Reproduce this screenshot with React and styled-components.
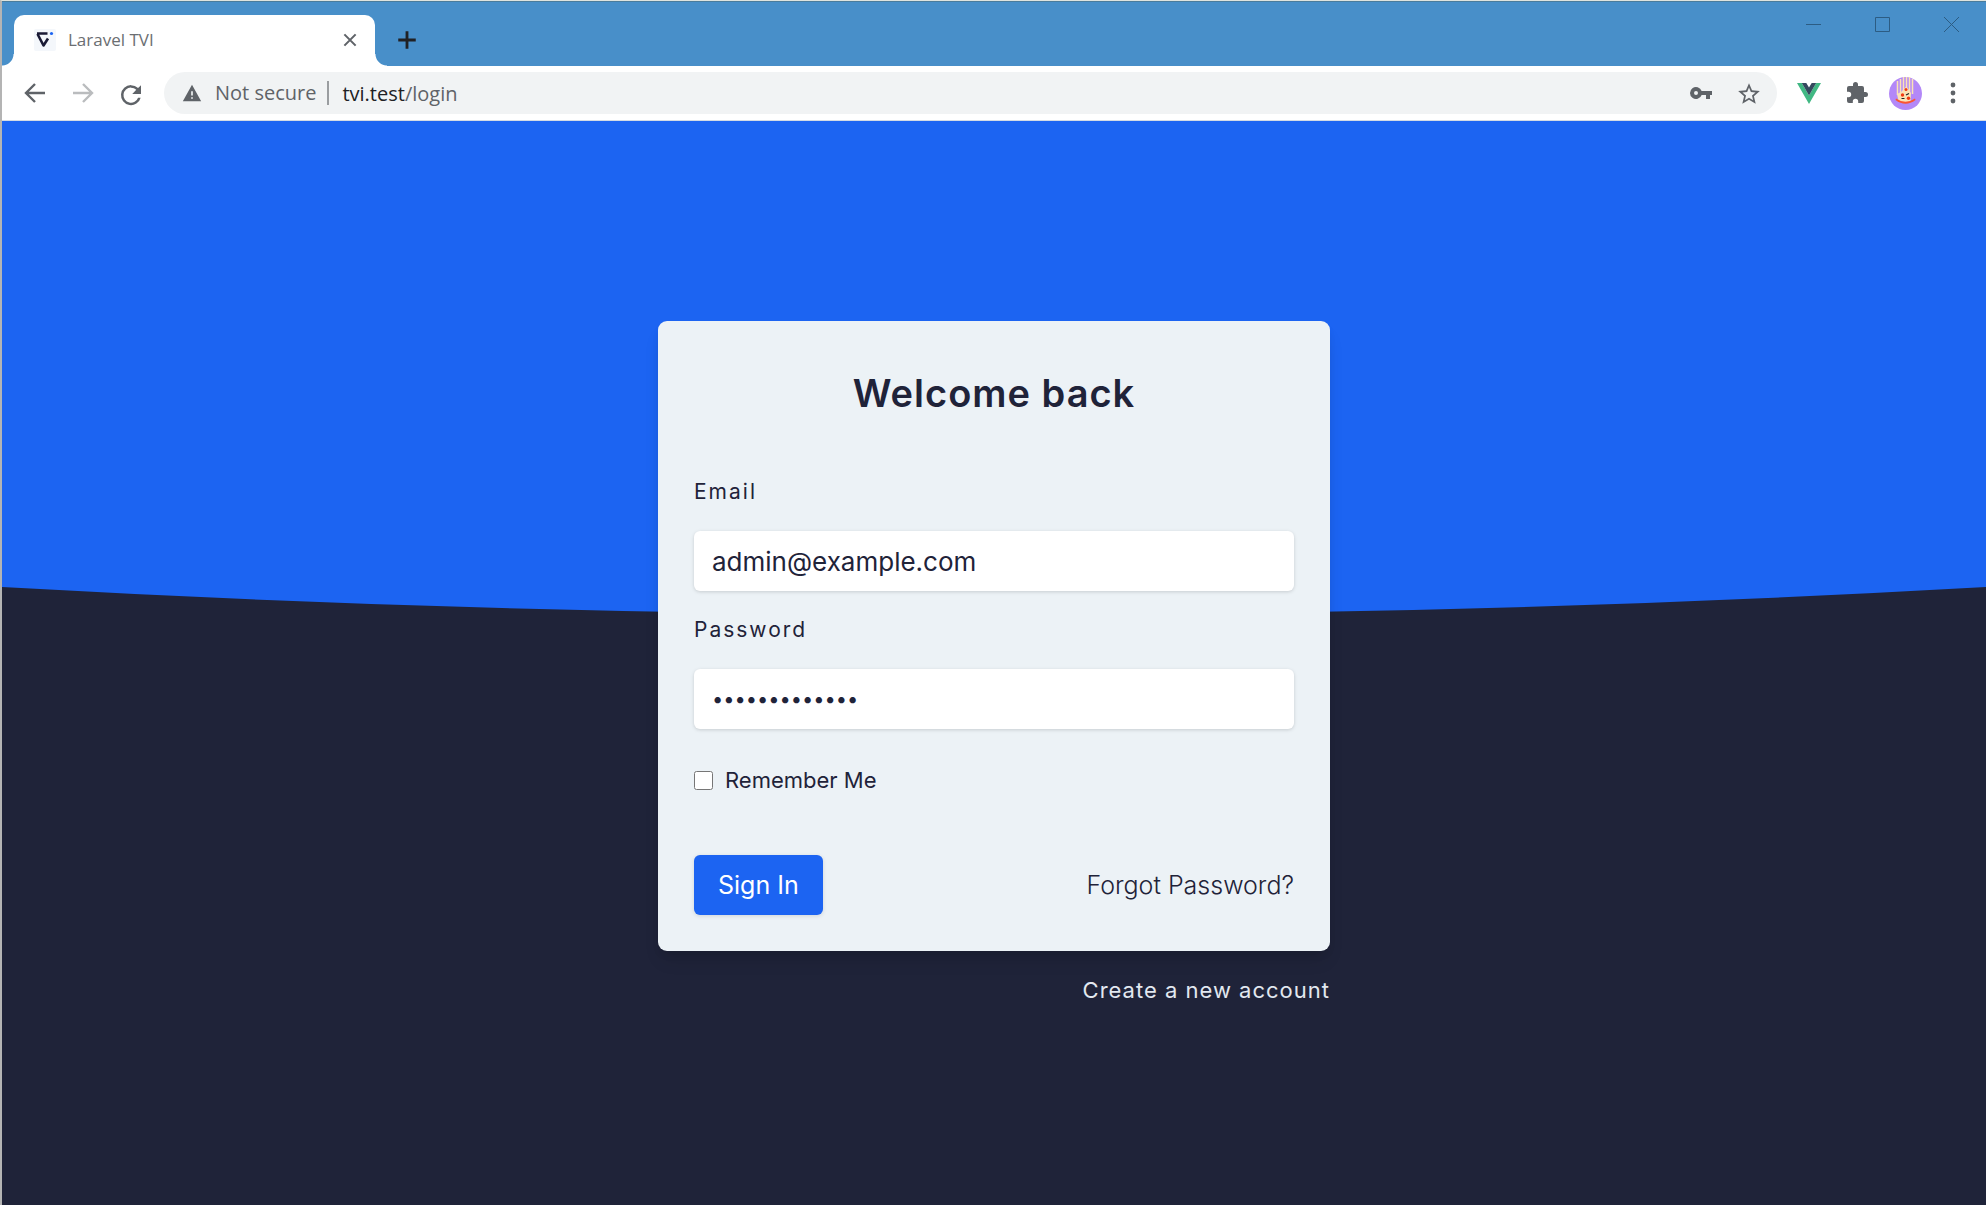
import React, { useState } from "react";
import styled, { createGlobalStyle } from "styled-components";

const navy = "#1f2339";
const blue = "#1c64f2";

const GlobalStyle = createGlobalStyle`
  *, *::before, *::after { box-sizing: border-box; }
  body { margin: 0; font-family: Inter, "Open Sans", sans-serif; color: ${navy}; }
  button, input { font: inherit; color: inherit; margin: 0; }
  a { color: inherit; text-decoration: none; }
  svg { display: block; }
`;

const Window = styled.div`
  display: flex;
  flex-direction: column;
  min-height: 100vh;
  border-left: 2px solid #b4b4b4;
  border-top: 1px solid #dfe3de;
  border-bottom: 1px solid #8b8b8b;
`;

const TitleBar = styled.header`
  display: flex;
  align-items: flex-end;
  height: 65px;
  background: #488fc9;
  border-top: 1px solid #4a7c9c;
  padding-left: 12px;
`;

const Tab = styled.div`
  position: relative;
  display: flex;
  align-items: center;
  width: 361px;
  height: 51px;
  padding: 0 16px 2px 20px;
  background: #fff;
  border-radius: 10px 10px 0 0;
  font-family: "Open Sans", sans-serif;
  font-size: 17px;
  color: #6b6e72;

  &::before, &::after {
    content: "";
    position: absolute;
    bottom: 0;
    width: 12px;
    height: 12px;
  }
  &::before {
    right: 100%;
    background: radial-gradient(circle at 0 0, transparent 11px, #fff 12px);
  }
  &::after {
    left: 100%;
    background: radial-gradient(circle at 100% 0, transparent 11px, #fff 12px);
  }
`;

const TabTitle = styled.span`
  flex: 1;
  margin-left: 12px;
`;

const IconButton = styled.button`
  display: grid;
  place-items: center;
  width: ${(p) => p.$w || 24}px;
  height: ${(p) => p.$h || 24}px;
  padding: 0;
  border: 0;
  background: none;
  color: ${(p) => p.$color || "#5f6368"};
`;

const NewTab = styled(IconButton)`
  align-self: center;
  margin: 12px 0 0 18px;
`;

const WindowControls = styled.div`
  display: flex;
  align-self: flex-start;
  margin-left: auto;
`;

const Toolbar = styled.nav`
  display: flex;
  align-items: center;
  height: 55px;
  padding: 0 9px;
  background: #fff;
  border-bottom: 1px solid #d5dbe4;
`;

const AddressBar = styled.div`
  display: flex;
  flex: 1;
  align-items: center;
  height: 42px;
  margin-left: 9px;
  padding: 0 4px 0 18px;
  border-radius: 21px;
  background: #f1f3f4;
  font-family: "Open Sans", sans-serif;
  font-size: 20px;
  color: #5f6368;
`;

const Security = styled.span`
  margin-left: 13px;
  padding-right: 11px;
  border-right: 2px solid #9a9da0;
  line-height: 24px;
`;

const Url = styled.span`
  flex: 1;
  margin-left: 13px;
  b { font-weight: 400; color: #202124; }
`;

const Actions = styled.div`
  display: flex;
  align-items: center;
  margin-left: 8px;
`;

const Page = styled.main`
  position: relative;
  flex: 1;
  display: flex;
  flex-direction: column;
  align-items: center;
  padding: 200px 24px;
  background: ${navy};
`;

const Backdrop = styled.svg`
  position: absolute;
  inset: 0 0 auto 0;
  width: 100%;
  height: 500px;
`;

const Content = styled.div`
  position: relative;
  display: flex;
  flex-direction: column;
  width: 100%;
  max-width: 672px;
`;

const Card = styled.form`
  display: flex;
  flex-direction: column;
  padding: 48px 36px 36px;
  border-radius: 9px;
  background: #ecf2f6;
  box-shadow: 0 12px 18px -4px rgba(0, 0, 0, 0.12), 0 5px 8px -2px rgba(0, 0, 0, 0.08);
`;

const Title = styled.h1`
  margin: 0 0 60px;
  font-size: 38px;
  line-height: 48px;
  font-weight: 600;
  letter-spacing: 1px;
  text-align: center;
`;

const Field = styled.div`
  display: flex;
  flex-direction: column;
  gap: 24px;
  margin-bottom: 24px;
`;

const Label = styled.label`
  font-size: 21px;
  line-height: 30px;
  letter-spacing: 2px;
`;

const TextInput = styled.input`
  height: 60px;
  padding: 0 18px;
  border: 0;
  border-radius: 6px;
  outline: 0;
  background: #fff;
  font-size: 26px;
  box-shadow: 0 1px 4px rgba(0, 0, 0, 0.1), 0 1px 3px rgba(0, 0, 0, 0.06);

  &[type="password"] { font-size: 20px; }
`;

const Remember = styled.label`
  display: flex;
  align-items: center;
  gap: 12px;
  margin-top: 12px;
  font-size: 22px;
  line-height: 30px;
`;

const Checkbox = styled.input`
  width: 19px;
  height: 19px;
`;

const FormFooter = styled.div`
  display: flex;
  align-items: center;
  justify-content: space-between;
  margin-top: 60px;
  font-size: 25px;
`;

const Submit = styled.button`
  height: 60px;
  padding: 0 24px;
  border: 0;
  border-radius: 6px;
  background: ${blue};
  color: #fff;
  box-shadow: 0 1px 4px rgba(0, 0, 0, 0.12);
`;

const ForgotLink = styled.a`
  font-weight: 300;
`;

const CreateLink = styled.a`
  align-self: flex-end;
  margin-top: 24px;
  font-size: 22px;
  line-height: 30px;
  letter-spacing: 1px;
  color: #e2e8f0;
`;

const Favicon = () => (
  <svg width="22" height="22" viewBox="0 0 22 22" aria-hidden="true">
    <rect width="22" height="22" rx="2" fill="#f4f7fb" />
    <path d="M3 4.500h10.500M3.500 5l6 11.500L14 9.500" fill="none" stroke="#1a1a35" strokeWidth="2.600" strokeLinejoin="round" />
    <circle cx="17.500" cy="4.500" r="1.600" fill={blue} />
  </svg>
);

const Stroke = ({ d, size = 24, width = 2.4 }) => (
  <svg width={size} height={size} viewBox="0 0 24 24" fill="none" stroke="currentColor" strokeWidth={width} aria-hidden="true">
    <path d={d} />
  </svg>
);

const Fill = ({ d, size = 25, color = "currentColor" }) => (
  <svg width={size} height={size} viewBox="0 0 24 24" fill={color} aria-hidden="true">
    <path d={d} />
  </svg>
);

const VueLogo = () => (
  <svg width="24" height="21" viewBox="0 0 24 21" aria-hidden="true">
    <path d="M0 0h4.800L12 12.500 19.200 0H24L12 21z" fill="#41b883" />
    <path d="M4.800 0H9.300L12 4.600 14.700 0h4.500L12 12.500z" fill="#34495e" />
  </svg>
);

const Avatar = () => (
  <svg width="33" height="33" viewBox="0 0 33 33" aria-hidden="true">
    <circle cx="16.500" cy="16.500" r="16.500" fill="#b388f8" />
    <path d="M8.500 4v14M11.500 2v14M14.500 0v16M17.500 0v10M20.500 0v16M23.500 2v15" stroke="#fbe3b5" strokeWidth="1.500" />
    <path d="M8 17l4-2 3-3 2.500-3 3 5 1.500 2-.5 8q-5 4-12 0z" fill="#fbe3b5" />
    <path d="M7 21.500q9.500 6.500 19 0l.5 1.500q-10 7.500-20 0z" fill="#fb5532" />
    <circle cx="17" cy="12.500" r="1.500" fill="#f23b12" />
    <circle cx="13.500" cy="18" r="1.700" fill="#f23b12" />
    <circle cx="19.500" cy="21.300" r="1.700" fill="#f23b12" />
    <path d="M17 18l3-1.500M12.500 21.500h3" stroke="#222" strokeWidth="1.200" />
  </svg>
);

export default function App() {
  const [email, setEmail] = useState("admin@example.com");
  const [password, setPassword] = useState("administrator");

  return (
    <>
      <GlobalStyle />
      <Window>
        <TitleBar>
          <Tab>
            <Favicon />
            <TabTitle>Laravel TVI</TabTitle>
            <IconButton $w={18} aria-label="Close tab">
              <Stroke size={18} width={2.8} d="M4.500 4.500l15 15M19.500 4.500l-15 15" />
            </IconButton>
          </Tab>
          <NewTab $w={28} $color="#202124" aria-label="New tab">
            <Stroke size={20} width={3.4} d="M12 1.500v21M1.500 12h21" />
          </NewTab>
          <WindowControls>
            <IconButton $w={69} $h={44} $color="#2c5c83" aria-label="Minimize">
              <svg width="15" height="15" aria-hidden="true"><path d="M0 7.500h15" stroke="currentColor" /></svg>
            </IconButton>
            <IconButton $w={69} $h={44} $color="#2c5c83" aria-label="Maximize">
              <svg width="15" height="15" aria-hidden="true"><path d="M.5.5h14v14H.5z" fill="none" stroke="currentColor" /></svg>
            </IconButton>
            <IconButton $w={69} $h={44} $color="#2c5c83" aria-label="Close">
              <svg width="15" height="15" aria-hidden="true"><path d="M0 0l15 15M15 0L0 15" stroke="currentColor" /></svg>
            </IconButton>
          </WindowControls>
        </TitleBar>

        <Toolbar>
          <IconButton $w={48} aria-label="Back"><Stroke d="M22 12H3.500M12 3l-9 9 9 9" /></IconButton>
          <IconButton $w={48} $color="#babcbe" aria-label="Forward"><Stroke d="M2 12h18.500M12 3l9 9-9 9" /></IconButton>
          <IconButton $w={48} aria-label="Reload">
            <Fill size={30} d="M17.650 5.650A7.960 7.960 0 0 0 12 3.300a8 8 0 1 0 7.730 10h-2.080A6 6 0 1 1 12 5.300c1.660 0 3.140.69 4.220 1.780L13 10.300h7V3.300z" />
          </IconButton>
          <AddressBar>
            <Fill size={20} d="M1 22h22L12 2zm12-3h-2v-2h2zm0-4h-2v-5h2z" />
            <Security>Not secure</Security>
            <Url><b>tvi.test</b>/login</Url>
            <IconButton $w={48} aria-label="Saved passwords">
              <Fill size={24} d="M12.650 10a6 6 0 1 0 0 4H17v4h4v-4h2v-4zM7 14a2 2 0 1 1 0-4 2 2 0 0 1 0 4z" />
            </IconButton>
            <IconButton $w={48} aria-label="Bookmark this page">
              <Fill size={26} d="M22 9.240l-7.190-.62L12 2 9.190 8.630 2 9.240l5.460 4.730L5.820 21 12 17.270 18.180 21l-1.630-7.030zM12 15.400l-3.760 2.270 1-4.280-3.320-2.880 4.380-.38L12 6.100l1.710 4.040 4.380.38-3.320 2.880 1 4.280z" />
            </IconButton>
          </AddressBar>
          <Actions>
            <IconButton $w={48} aria-label="Vue devtools"><VueLogo /></IconButton>
            <IconButton $w={48} aria-label="Extensions">
              <Fill size={24} d="M20.500 11H19V7a2 2 0 0 0-2-2h-4V3.500a2.500 2.500 0 0 0-5 0V5H4a2 2 0 0 0-2 2v3.800h1.500a2.700 2.700 0 0 1 0 5.400H2V20a2 2 0 0 0 2 2h3.800v-1.500a2.700 2.700 0 0 1 5.400 0V22H17a2 2 0 0 0 2-2v-4h1.500a2.500 2.500 0 0 0 0-5z" />
            </IconButton>
            <IconButton $w={48} $h={34} aria-label="Profile"><Avatar /></IconButton>
            <IconButton $w={48} aria-label="Menu">
              <svg width="6" height="22" viewBox="0 0 6 22" fill="currentColor" aria-hidden="true">
                <circle cx="3" cy="3" r="2.400" /><circle cx="3" cy="11" r="2.400" /><circle cx="3" cy="19" r="2.400" />
              </svg>
            </IconButton>
          </Actions>
        </Toolbar>

        <Page>
          <Backdrop viewBox="0 0 1984 500" preserveAspectRatio="none" aria-hidden="true">
            <path d="M0 0H1984V466Q992 522 0 466z" fill={blue} />
          </Backdrop>
          <Content>
            <Card onSubmit={(e) => e.preventDefault()}>
              <Title>Welcome back</Title>
              <Field>
                <Label htmlFor="email">Email</Label>
                <TextInput id="email" type="email" value={email} onChange={(e) => setEmail(e.target.value)} />
              </Field>
              <Field>
                <Label htmlFor="password">Password</Label>
                <TextInput id="password" type="password" value={password} onChange={(e) => setPassword(e.target.value)} />
              </Field>
              <Remember>
                <Checkbox type="checkbox" />
                Remember Me
              </Remember>
              <FormFooter>
                <Submit type="submit">Sign In</Submit>
                <ForgotLink href="#forgot">Forgot Password?</ForgotLink>
              </FormFooter>
            </Card>
            <CreateLink href="#register">Create a new account</CreateLink>
          </Content>
        </Page>
      </Window>
    </>
  );
}
